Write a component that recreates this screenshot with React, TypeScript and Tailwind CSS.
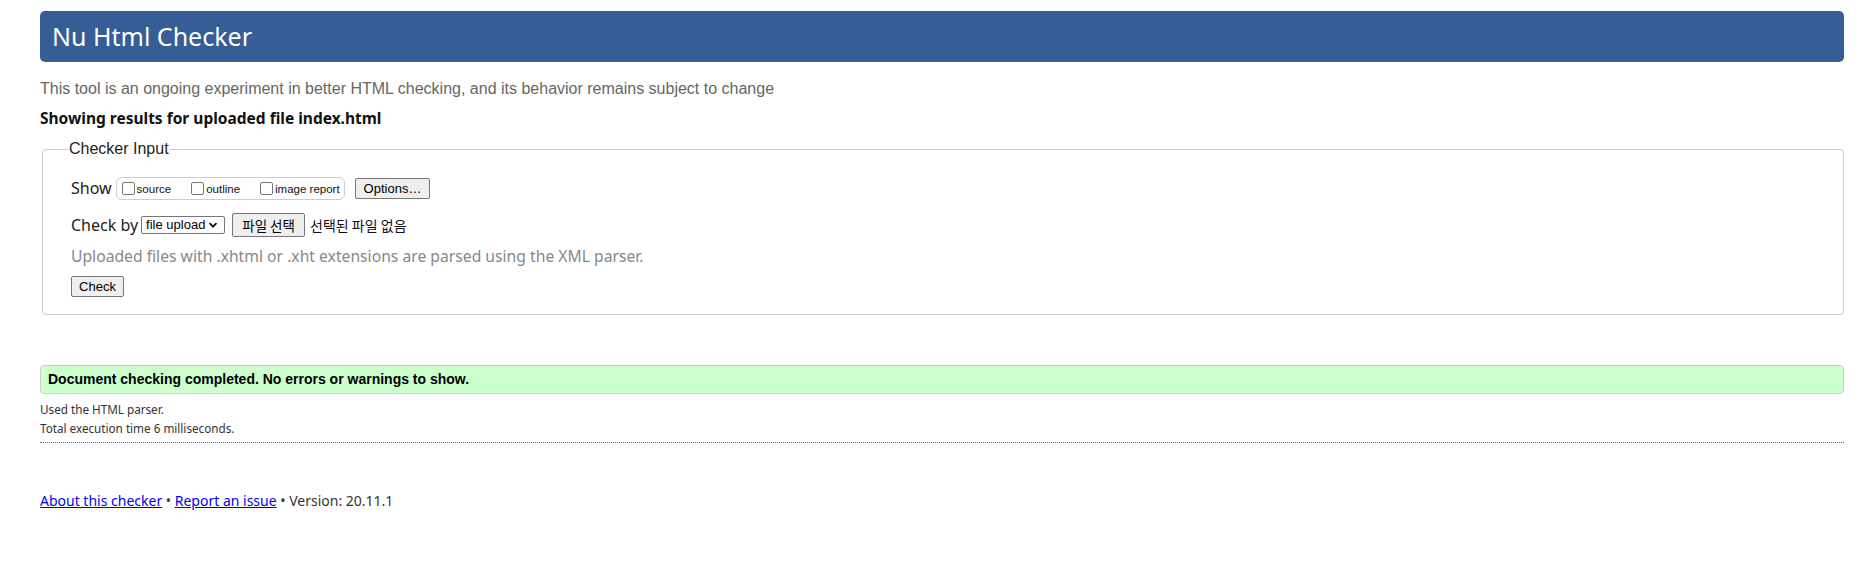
import React from "react";

const sans = "font-['Noto_Sans','Noto_Sans_CJK_KR',sans-serif]";
const arial = "font-['Liberation_Sans',Arial,sans-serif]";
const kr = "font-['Noto_Sans_CJK_KR','Noto_Sans',sans-serif]";

const Box = () => (
  <span className="inline-block w-[13px] h-[13px] border border-[#767676] rounded-[2px] bg-white mr-[2px]" />
);

const Check = ({ label }: { label: string }) => (
  <span className="flex items-center">
    <Box />
    <span className={`${arial} text-[11.5px] text-[#111] mt-[3px]`}>{label}</span>
  </span>
);

const App = () => {
  return (
    <div className="h-[588px] bg-white pl-[40px] pr-[28px] pt-[11px] text-[#222]">
      {/* header */}
      <h1
        className={`${sans} h-[51px] bg-[#365d95] rounded-[5px] text-white text-[25px] pl-[12px] flex items-center`}
      >
        Nu Html Checker
      </h1>

      <p className={`${arial} text-[16px] text-[#666] mt-[17px] leading-[19px]`}>
        This tool is an ongoing experiment in better HTML checking, and its behavior remains subject to change
      </p>

      <p className={`${sans} font-bold text-[15.5px] text-[#111] mt-[10px] leading-[21px]`}>
        Showing results for uploaded file index.html
      </p>

      {/* checker input */}
      <fieldset className="mt-[11px] ml-[2px] border border-[#ccc] rounded-[4px] pl-[28px] pr-4 pb-[17px]">
        <legend className={`${arial} text-[16px] text-[#222] ml-[-2px] leading-[18px]`}>Checker Input</legend>

        <div className="flex items-center h-[24px] mt-[18px]">
          <span className={`${sans} text-[16px] mr-[4px]`}>Show</span>
          <div className="flex items-center gap-[20px] h-[23px] border border-[#ccc] rounded-[6px] pl-[5px] pr-[4px]">
            <Check label="source" />
            <Check label="outline" />
            <Check label="image report" />
          </div>
          <button
            className={`${arial} ml-[10px] h-[21px] px-[8px] text-[13px] bg-[#efefef] border border-[#767676] rounded-[2px] text-black`}
          >
            Options…
          </button>
        </div>

        <div className="flex items-center h-[24px] mt-[13px]">
          <span className={`${sans} text-[16px] mr-[3px]`}>Check by</span>
          <span
            className={`${arial} flex items-center h-[18px] w-[84px] border border-[#767676] rounded-[2px] pl-[4px] text-[13px] text-black`}
          >
            file upload
            <svg className="ml-[3px]" width="10" height="10" viewBox="0 0 10 10">
              <path d="M1.5 3.2 L5 6.7 L8.5 3.2" fill="none" stroke="#111" strokeWidth="1.8" />
            </svg>
          </span>
          <button
            className={`${kr} ml-[7px] h-[24px] w-[73px] text-[13.5px] bg-[#efefef] border border-[#767676] rounded-[2px] text-black`}
          >
            파일 선택
          </button>
          <span className={`${kr} ml-[5px] text-[14px] text-[#111]`}>선택된 파일 없음</span>
        </div>

        <p className={`${sans} text-[15.7px] text-[#888] mt-[9px] leading-[20px]`}>
          Uploaded files with .xhtml or .xht extensions are parsed using the XML parser.
        </p>

        <button
          className={`${arial} mt-[10px] h-[21px] w-[53px] text-[13px] bg-[#efefef] border border-[#767676] rounded-[2px] text-black`}
        >
          Check
        </button>
      </fieldset>

      {/* result */}
      <div
        className={`${arial} mt-[50px] h-[29px] bg-[#ccffcc] border border-[#ccc] rounded-[4px] pl-[7px] flex items-center font-bold text-[14px] text-black`}
      >
        Document checking completed. No errors or warnings to show.
      </div>

      <div className={`${sans} text-[11.7px] text-[#333] mt-[6px] leading-[19px]`}>
        <p>Used the HTML parser.</p>
        <p>Total execution time 6 milliseconds.</p>
      </div>
      <div className="mt-[4px] border-t border-dotted border-[#666]" />

      {/* footer */}
      <p className={`${sans} mt-[48px] text-[14px] text-[#333] leading-[20px]`}>
        <a href="#" className="text-[#0000ee] underline">About this checker</a>
        {" • "}
        <a href="#" className="text-[#0000ee] underline">Report an issue</a>
        {" • Version: 20.11.1"}
      </p>
    </div>
  );
};

export default App;
